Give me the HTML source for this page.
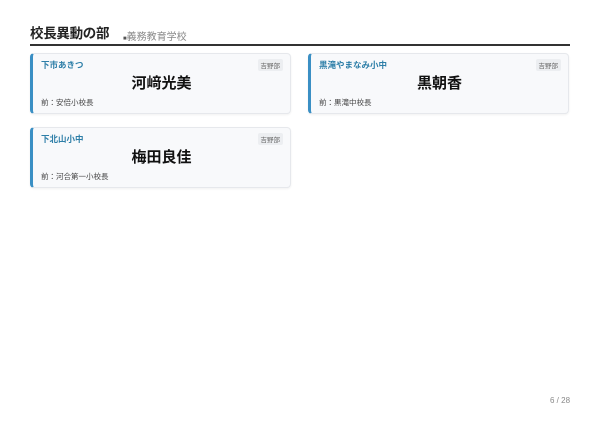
<!DOCTYPE html>
<html><head><meta charset="utf-8"><style>
*{margin:0;padding:0;box-sizing:border-box}
body{width:600px;height:424px;background:#fff;font-family:"Liberation Sans","Noto Sans CJK JP",sans-serif;position:relative;overflow:hidden}
.title{position:absolute;left:30px;top:22px;font-size:13.5px;font-weight:bold;color:#222;letter-spacing:-0.3px}
.sub{position:absolute;left:123px;top:28px;font-size:10px;color:#888}
.sub b{font-size:6px;color:#555}
.line{position:absolute;left:30px;top:44px;width:540px;height:2px;background:#333}
.card{position:absolute;width:261px;height:61px;background:#f8f9fb;border:1px solid #e6e8ec;border-left:3px solid #3a8fc4;border-radius:4px;box-shadow:0 1px 2px rgba(0,0,0,.06)}
.sch{position:absolute;left:8px;top:5px;font-size:8.5px;font-weight:bold;color:#2e7fa8}
.bad{position:absolute;right:7px;top:5px;font-size:6.5px;color:#666;background:#eceef1;padding:1px 3px;border-radius:2px}
.nm{position:absolute;left:0;right:0;top:18px;text-align:center;font-size:15px;font-weight:bold;color:#111}
.pr{position:absolute;left:8px;top:43px;font-size:7.5px;color:#444}
.pg{position:absolute;left:550px;top:396px;font-size:8px;color:#888}
</style></head><body>
<div class="title">校長異動の部</div>
<div class="sub"><b>■</b>義務教育学校</div>
<div class="line"></div>
<div class="card" style="left:30px;top:53px"><div class="sch">下市あきつ</div><div class="bad">吉野部</div><div class="nm">河﨑光美</div><div class="pr">前：安倍小校長</div></div>
<div class="card" style="left:308px;top:53px"><div class="sch">黒滝やまなみ小中</div><div class="bad">吉野部</div><div class="nm">黒朝香</div><div class="pr">前：黒滝中校長</div></div>
<div class="card" style="left:30px;top:127px"><div class="sch">下北山小中</div><div class="bad">吉野部</div><div class="nm">梅田良佳</div><div class="pr">前：河合第一小校長</div></div>
<div class="pg">6 / 28</div>
</body></html>
